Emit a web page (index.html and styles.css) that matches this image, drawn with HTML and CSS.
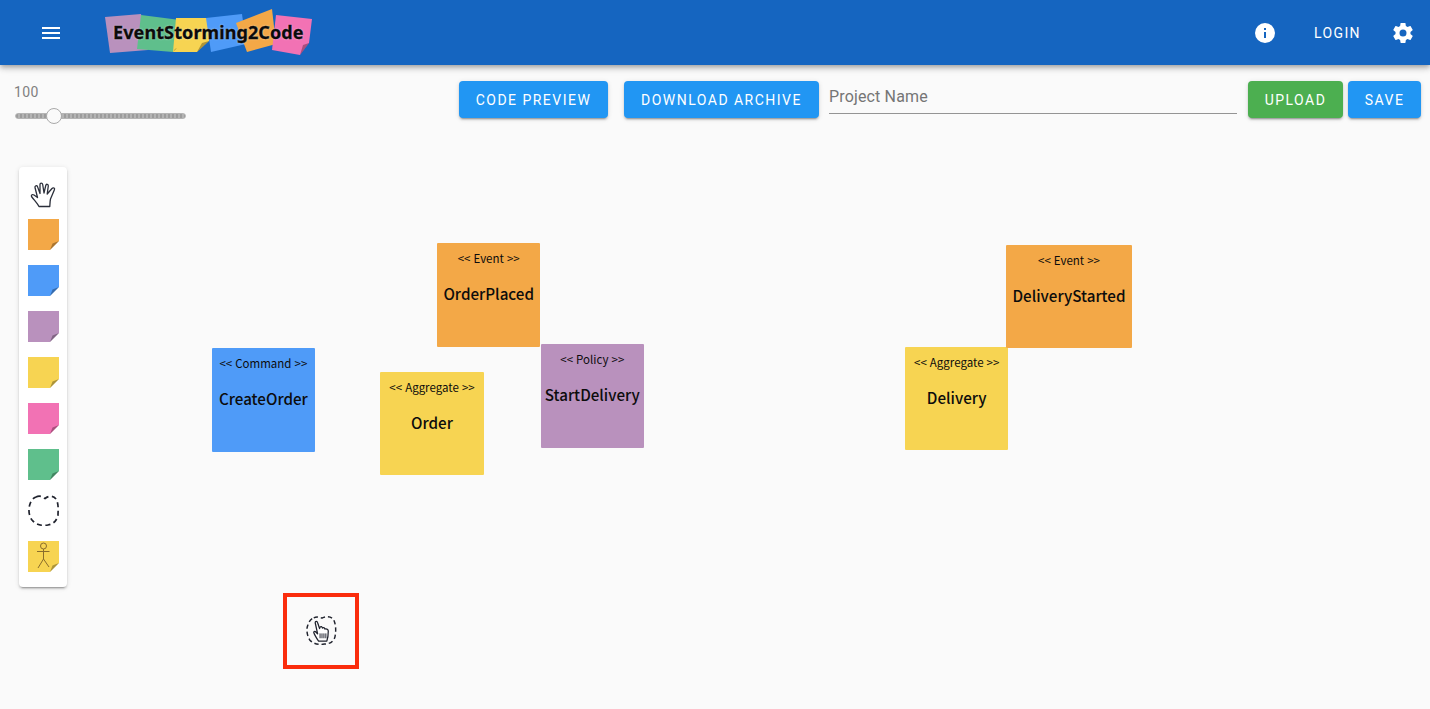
FILE: index.html
```html
<!DOCTYPE html>
<html lang="en">
<head>
<meta charset="utf-8">
<title>EventStorming2Code</title>
<link rel="stylesheet" href="styles.css">
</head>
<body>
<svg class="defs" width="0" height="0" aria-hidden="true">
  <defs>
    <symbol id="note" viewBox="0 0 31 31">
      <path d="M0 0H31V22L22 31H0Z" fill="currentColor"/>
      <path d="M31 22L22 31L24.5 24.5Z" fill="#000" fill-opacity=".3"/>
    </symbol>
  </defs>
</svg>
<header class="appbar">
  <svg class="icon menu-icon" viewBox="0 0 24 24"><path d="M3,6H21V8H3V6M3,11H21V13H3V11M3,16H21V18H3V16Z"/></svg>
  <div class="logo">
    <svg class="logo-art" viewBox="0 0 208 47" width="208" height="47">
      <polygon points="0,8 36,5 43,41 5,44" fill="#b991bd"/>
      <polygon points="36,6 75,11 72,39 68,43 32,40" fill="#5fbf8c"/>
      <polygon points="71,9 103,9 104,32 92,43 68,43" fill="#f7d452"/>
      <polygon points="101,9 137,5 141,35 106,43" fill="#4f9bf8"/>
      <polygon points="131,14 167,0 171,35 142,43" fill="#f3a847"/>
      <polygon points="171,6 207,10 204,34 195,46 167,41" fill="#f272b4"/>
      <path d="M72,39L68,43L70,40Z M104,32L92,43L97,34Z M204,34L195,46L198,36Z" fill="#000" fill-opacity=".3"/>
    </svg>
    <span class="logo-text">EventStorming2Code</span>
  </div>
  <div class="appbar-end">
    <svg class="icon info-icon" viewBox="0 0 24 24"><path d="M13,9H11V7H13M13,17H11V11H13M12,2A10,10 0 0,0 2,12A10,10 0 0,0 12,22A10,10 0 0,0 22,12A10,10 0 0,0 12,2Z"/></svg>
    <span class="login">LOGIN</span>
    <svg class="icon cog-icon" viewBox="0 0 24 24"><path d="M12,15.5A3.5,3.5 0 0,1 8.5,12A3.5,3.5 0 0,1 12,8.5A3.5,3.5 0 0,1 15.5,12A3.5,3.5 0 0,1 12,15.5M19.43,12.97C19.47,12.65 19.5,12.33 19.5,12C19.5,11.67 19.47,11.34 19.43,11L21.54,9.37C21.73,9.22 21.78,8.95 21.66,8.73L19.66,5.27C19.54,5.05 19.27,4.96 19.05,5.05L16.56,6.05C16.04,5.66 15.5,5.32 14.87,5.07L14.5,2.42C14.46,2.18 14.25,2 14,2H10C9.75,2 9.54,2.18 9.5,2.42L9.13,5.07C8.5,5.32 7.96,5.66 7.44,6.05L4.95,5.05C4.73,4.96 4.46,5.05 4.34,5.27L2.34,8.73C2.21,8.95 2.27,9.22 2.46,9.37L4.57,11C4.53,11.34 4.5,11.67 4.5,12C4.5,12.33 4.53,12.65 4.57,12.97L2.46,14.63C2.27,14.78 2.21,15.05 2.34,15.27L4.34,18.73C4.46,18.95 4.73,19.03 4.95,18.95L7.44,17.94C7.96,18.34 8.5,18.68 9.13,18.93L9.5,21.58C9.54,21.82 9.75,22 10,22H14C14.25,22 14.46,21.82 14.5,21.58L14.87,18.93C15.5,18.67 16.04,18.34 16.56,17.94L19.05,18.95C19.27,19.03 19.54,18.95 19.66,18.73L21.66,15.27C21.78,15.05 21.73,14.78 21.54,14.63L19.43,12.97Z"/></svg>
  </div>
</header>

<section class="toolbar">
  <div class="zoom">
    <div class="zoom-label">100</div>
    <div class="slider"><span class="thumb"></span></div>
  </div>
  <div class="actions">
    <button class="btn btn-blue btn-code">CODE PREVIEW</button>
    <button class="btn btn-blue btn-download">DOWNLOAD ARCHIVE</button>
    <div class="project">Project Name</div>
    <button class="btn btn-green btn-upload">UPLOAD</button>
    <button class="btn btn-blue btn-save">SAVE</button>
  </div>
</section>

<main class="stage">
  <aside class="palette">
    <svg class="hand" viewBox="0 0 28 28" width="28" height="28" fill="none" stroke="#2b2f3a" stroke-width="1.3" stroke-linejoin="round" stroke-linecap="round">
      <path d="M9 25.500C7.500 22.500 4.500 19.500 1.500 15.500C1 14 2.500 13 4 14L7.500 16.500L5 6.500C4.600 4.800 6.800 4 7.500 5.600L10 12.500L10 3.500C10 1.600 12.400 1.600 12.700 3.500L14 12L15.800 4.400C16.200 2.600 18.500 3 18.300 5L17.200 13L22 7.500C23.400 6 25.300 7.400 24.300 9L20.500 18C20 20 20 23 19.800 25.500Z"/>
    </svg>
    <svg class="tool c-orange"><use href="#note"/></svg>
    <svg class="tool c-blue"><use href="#note"/></svg>
    <svg class="tool c-purple"><use href="#note"/></svg>
    <svg class="tool c-yellow"><use href="#note"/></svg>
    <svg class="tool c-pink"><use href="#note"/></svg>
    <svg class="tool c-green"><use href="#note"/></svg>
    <svg class="tool" viewBox="0 0 31 31" fill="none" stroke="#20232e" stroke-width="1.7" stroke-dasharray="5 3.500"><path d="M8 2C12 0 14 2 17 3.500C20 1 25 0 28 4C31 9 30 16 30 20C29 25 26 29 20 30C14 31 8 30 4 25C1 21 0 15 2 9C3 6 5 3 8 2Z"/></svg>
    <svg class="tool c-yellow" viewBox="0 0 31 31">
      <use href="#note" width="31" height="31"/>
      <g fill="none" stroke="#8a6d2c" stroke-width="1"><circle cx="15.500" cy="5" r="3"/><path d="M15.500 8V18M9 10.500H21.500M15.500 18L10 27M15.500 18L21 26"/></g>
    </svg>
  </aside>

  <article class="sticky c-bg-blue s-create"><p class="kind">&lt;&lt; Command &gt;&gt;</p><p class="name">CreateOrder</p></article>
  <article class="sticky c-bg-orange s-placed"><p class="kind">&lt;&lt; Event &gt;&gt;</p><p class="name">OrderPlaced</p></article>
  <article class="sticky c-bg-yellow s-order"><p class="kind">&lt;&lt; Aggregate &gt;&gt;</p><p class="name">Order</p></article>
  <article class="sticky c-bg-purple s-start"><p class="kind">&lt;&lt; Policy &gt;&gt;</p><p class="name">StartDelivery</p></article>
  <article class="sticky c-bg-yellow s-delivery"><p class="kind">&lt;&lt; Aggregate &gt;&gt;</p><p class="name">Delivery</p></article>
  <article class="sticky c-bg-orange s-started"><p class="kind">&lt;&lt; Event &gt;&gt;</p><p class="name">DeliveryStarted</p></article>

  <div class="callout">
    <svg class="callout-art" viewBox="0 0 32 32" width="31" height="31">
      <path d="M8 3C12 1 14 3 17 3C21 1 27 1 29 6C31 11 31 17 30 22C29 27 25 30 19 30C13 31 8 30 4 26C1 21 0 15 2 10C3 7 5 4 8 3Z" fill="none" stroke="#20232e" stroke-width="1.500" stroke-dasharray="4.500 3"/>
      <path d="M13 27C11 24 9 21 8 18C8 16.500 9.500 16.500 10.500 18L12 19.500L9.500 8C9.500 6.500 11.500 6 12 8L14 14L14.500 12.500C15.500 11.500 16.500 12 17 13.500C18 12.500 19 13 19.500 14.500C20.500 14 23 14.500 23 16.500C23 20 22.500 24 21.500 27Z" fill="#fff" stroke="#20232e" stroke-width="1.300" stroke-linejoin="round"/>
      <path d="M14.500 19V24M16.500 19V24M18.500 19V24M20.500 19V24" stroke="#20232e" stroke-width="1"/>
    </svg>
  </div>
</main>
</body>
</html>
```

FILE: styles.css
```css
* { box-sizing: border-box; }

html, body { height: 100%; }

body {
  margin: 0;
  height: 709px;
  overflow: hidden;
  background: #fafafa;
  font-family: Roboto, "Liberation Sans", sans-serif;
}

.defs { position: absolute; }

.icon { width: 24px; height: 24px; fill: #fff; flex: none; }

.appbar {
  height: 65px;
  background: #1565c0;
  display: flex;
  align-items: center;
  padding: 0 15px 0 39px;
  box-shadow: 0 2px 4px -1px rgba(0,0,0,.2), 0 4px 5px 0 rgba(0,0,0,.14), 0 1px 10px 0 rgba(0,0,0,.12);
  position: relative;
  z-index: 2;
}

.logo {
  width: 208px;
  height: 47px;
  margin-left: 42px;
  align-self: flex-start;
  margin-top: 9px;
  position: relative;
}

.logo-art { display: block; }

.logo-text {
  position: absolute;
  left: 8px;
  top: 10px;
  font-family: "Noto Sans", "DejaVu Sans", sans-serif;
  font-weight: 700;
  font-size: 18px;
  letter-spacing: .1px;
  line-height: 26px;
  color: #0b0b0b;
  -webkit-text-stroke: .3px #0b0b0b;
  text-shadow: 0 0 2px rgba(255,255,255,.7);
  white-space: nowrap;
}

.appbar-end {
  margin-left: auto;
  display: flex;
  align-items: center;
}

.login {
  color: #fff;
  font-size: 14px;
  font-weight: 400;
  letter-spacing: 1.400px;
  margin: 0 30px 0 37px;
}

.toolbar {
  display: flex;
  height: 65px;
  padding: 0 9px 0 14px;
}

.zoom { width: 172px; padding-top: 19px; }

.zoom-label {
  font-size: 14px;
  line-height: 16px;
  color: #808080;
  letter-spacing: .4px;
}

.slider {
  margin-top: 13px;
  height: 6px;
  margin-left: 1px;
  background: repeating-linear-gradient(90deg, #9c9c9c 0 2px, #b4b4b4 2px 4px);
  border-radius: 3px;
  border: 1px solid #b5b5b5;
  position: relative;
}

.thumb {
  position: absolute;
  left: 29.500px;
  top: -6px;
  width: 16px;
  height: 16px;
  border-radius: 50%;
  background: #fafafa;
  border: 1.500px solid #a9a9a9;
}

.actions {
  margin-left: auto;
  display: flex;
  align-items: flex-start;
  padding-top: 16px;
}

.btn {
  height: 37px;
  border: 0;
  border-radius: 4px;
  color: #fff;
  font-family: Roboto, sans-serif;
  font-size: 14px;
  font-weight: 400;
  letter-spacing: 1.480px;
  padding: 0;
  box-shadow: 0 3px 1px -2px rgba(0,0,0,.2), 0 2px 2px 0 rgba(0,0,0,.14), 0 1px 5px 0 rgba(0,0,0,.12);
}

.btn-blue { background: #2196f3; }
.btn-green { background: #4caf50; }

.btn-code { width: 149px; }
.btn-download { width: 195px; margin-left: 16px; }
.btn-upload { width: 95px; margin-left: 11px; }
.btn-save { width: 73px; margin-left: 5px; }

.project {
  width: 408px;
  height: 33px;
  margin-left: 10px;
  border-bottom: 1px solid #949494;
  color: #757575;
  font-size: 16px;
  letter-spacing: .15px;
  line-height: 32px;
}

.stage { position: relative; height: 579px; padding: 37px 0 0 19px; }

.palette {
  width: 48px;
  height: 420px;
  background: #fff;
  border-radius: 4px;
  box-shadow: 0 3px 1px -2px rgba(0,0,0,.2), 0 2px 2px 0 rgba(0,0,0,.14), 0 1px 5px 0 rgba(0,0,0,.12);
  display: flex;
  flex-direction: column;
  align-items: center;
  padding-top: 14px;
}

.hand { margin: 0 0 10px 2px; }

.tool { width: 31px; height: 31px; flex: none; margin-bottom: 15px; }

.c-orange { color: #f3a847; }
.c-blue { color: #4f9bf8; }
.c-purple { color: #b991bd; }
.c-yellow { color: #f7d452; }
.c-pink { color: #f272b4; }
.c-green { color: #5fbf8c; }

.c-bg-orange { background: #f3a847; }
.c-bg-blue { background: #4f9bf8; }
.c-bg-purple { background: #b991bd; }
.c-bg-yellow { background: #f7d452; }

.sticky {
  position: absolute;
  width: 103.400px;
  height: 103.400px;
  border-radius: 1px;
  text-align: center;
  color: #0c0c0c;
  font-family: "Noto Sans CJK KR", "Noto Sans", sans-serif;
}

.sticky p { margin: 0; }

.kind {
  font-size: 11.500px;
  word-spacing: .5px;
  line-height: 16px;
  padding-top: 7px;
  white-space: nowrap;
}

.sticky .name {
  font-size: 15.200px;
  font-weight: 500;
  line-height: 22px;
  margin-top: 16px;
  white-space: nowrap;
}

.s-create { left: 211.700px; top: 218.300px; }
.s-placed { left: 437px; top: 113.300px; }
.s-order { left: 380.300px; top: 242px; }
.s-start { left: 540.600px; top: 214.400px; }
.s-delivery { left: 905px; top: 216.800px; }
.s-started { left: 1006px; top: 115px; width: 126px; }

.callout {
  position: absolute;
  left: 283px;
  top: 463px;
  width: 76px;
  height: 76px;
  border: 4px solid #fa2c0c;
  display: flex;
  align-items: center;
  justify-content: center;
}

.callout-art { margin-bottom: 2px; }
```
